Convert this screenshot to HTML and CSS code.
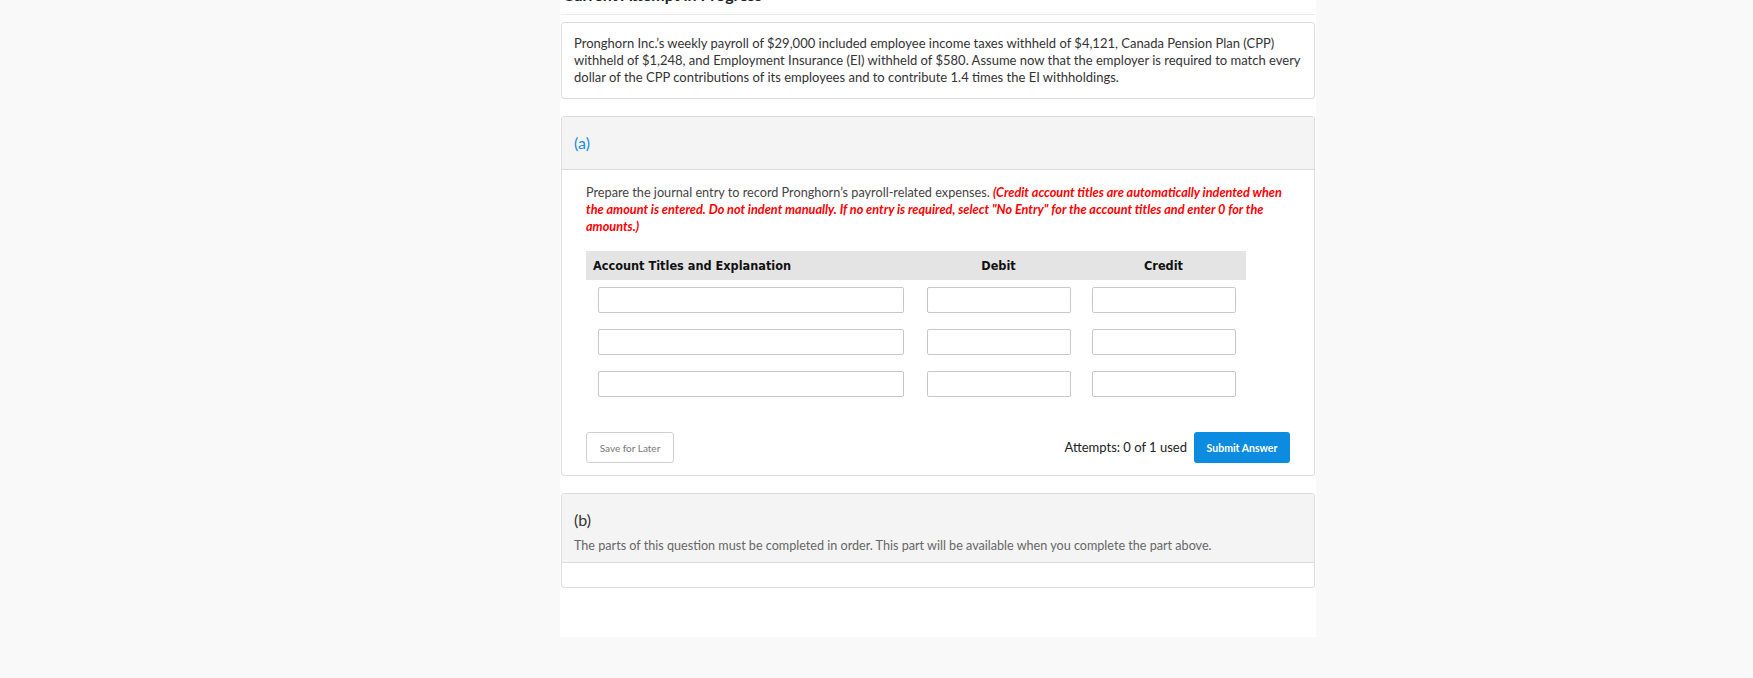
FILE: index.html
```html
<!DOCTYPE html>
<html lang="en">
<head>
    <meta charset="UTF-8">
    <meta name="viewport" content="width=device-width, initial-scale=1.0">
    <title>Current Attempt in Progress</title>
    <link rel="stylesheet" href="styles.css">
</head>
<body>
<div class="page">
    <div class="attempt-title">Current Attempt in Progress</div>

    <div class="card question">
        Pronghorn Inc.’s weekly payroll of $29,000 included employee income taxes withheld of $4,121, Canada Pension Plan (CPP)
        withheld of $1,248, and Employment Insurance (EI) withheld of $580. Assume now that the employer is required to match every
        dollar of the CPP contributions of its employees and to contribute 1.4 times the EI withholdings.
    </div>

    <div class="card part">
        <div class="part-head">
            <div class="part-label active">(a)</div>
        </div>
        <div class="part-body">
            <p class="instructions">
                Prepare the journal entry to record Pronghorn’s payroll-related expenses.
                <span class="note">(Credit account titles are automatically indented when the amount is entered. Do not indent manually. If no entry is required, select "No Entry" for the account titles and enter 0 for the amounts.)</span>
            </p>

            <div class="journal">
                <div class="journal-head">
                    <div class="col-title">Account Titles and Explanation</div>
                    <div class="col-num">Debit</div>
                    <div class="col-num">Credit</div>
                </div>
                <div class="journal-row">
                    <div class="cell"><input type="text" class="in-title"></div>
                    <div class="cell"><input type="text" class="in-num"></div>
                    <div class="cell"><input type="text" class="in-num"></div>
                </div>
                <div class="journal-row">
                    <div class="cell"><input type="text" class="in-title"></div>
                    <div class="cell"><input type="text" class="in-num"></div>
                    <div class="cell"><input type="text" class="in-num"></div>
                </div>
                <div class="journal-row">
                    <div class="cell"><input type="text" class="in-title"></div>
                    <div class="cell"><input type="text" class="in-num"></div>
                    <div class="cell"><input type="text" class="in-num"></div>
                </div>
            </div>

            <div class="actions">
                <button class="btn-save">Save for Later</button>
                <div class="submit-group">
                    <span class="attempts">Attempts: 0 of 1 used</span>
                    <button class="btn-submit">Submit Answer</button>
                </div>
            </div>
        </div>
    </div>

    <div class="card part">
        <div class="part-head locked">
            <div class="part-label">(b)</div>
            <div class="locked-text">The parts of this question must be completed in order. This part will be available when you complete the part above.</div>
        </div>
        <div class="part-body empty"></div>
    </div>
</div>
</body>
</html>
```

FILE: styles.css
```css
body {
    font-family: Lato, "Open Sans", Arial, sans-serif;
    background-color: #f9f9f9;
    margin: 0;
    padding: 0;
    color: #333;
}

.page {
    width: 756px;
    margin: -15px 0 0 560px;
    background-color: white;
    padding: 0 0 32px;
    box-sizing: border-box;
}

.attempt-title {
    font-size: 16px;
    font-weight: bold;
    line-height: 20px;
    color: #222;
    padding: 0 2px 9px;
    margin: 0 1px 7px;
    border-bottom: 1px solid #ebebeb;
}

.card {
    margin: 0 1px 17px;
    border: 1px solid #dcdcdc;
    border-radius: 3px;
    background-color: white;
}

.question {
    padding: 12px 12px;
    font-size: 13px;
    line-height: 17px;
    color: #333;
}

.part-head {
    background-color: #f4f4f4;
    border-bottom: 1px solid #dcdcdc;
    padding: 15px 12px;
}

.part-head.locked {
    padding: 15px 12px 8px;
}

.part-label {
    font-size: 16px;
    line-height: 22px;
    color: #333;
}

.part-label.active {
    color: #1b8ddb;
}

.locked-text {
    margin-top: 6px;
    font-size: 12.6px;
    line-height: 17px;
    color: #666;
}

.part-body {
    padding: 14px 24px 12px;
}

.part-body.empty {
    padding: 12px 0;
}

.instructions {
    margin: 0 0 16px;
    font-size: 12.7px;
    line-height: 17px;
    color: #444;
}

.note {
    color: #ff0000;
    font-weight: bold;
    font-style: italic;
}

.journal {
    width: 660px;
}

.journal-head,
.journal-row {
    display: grid;
    grid-template-columns: 330px 165px 165px;
}

.journal-head {
    background-color: #e4e4e4;
    height: 29px;
    align-items: center;
    font-family: "DejaVu Sans Condensed", "DejaVu Sans", sans-serif;
    font-size: 12.6px;
    font-weight: bold;
    color: #111;
}

.col-title {
    padding-left: 7px;
}

.col-num {
    text-align: center;
}

.journal-row {
    padding: 7px 0 9px;
}

.cell {
    display: flex;
    justify-content: center;
}

input[type="text"] {
    height: 26px;
    box-sizing: border-box;
    border: 1px solid #c8c8c8;
    border-radius: 2px;
    padding: 2px 5px;
    font-size: 13px;
    background: white;
}

.in-title {
    width: 306px;
}

.in-num {
    width: 144px;
}

.actions {
    margin-top: 26px;
    display: flex;
    justify-content: space-between;
    align-items: center;
}

.btn-save {
    width: 88px;
    height: 31px;
    background: white;
    border: 1px solid #cfcfcf;
    border-radius: 3px;
    font-family: Lato, Arial, sans-serif;
    font-size: 10px;
    color: #777;
    padding: 0;
}

.submit-group {
    display: flex;
    align-items: center;
    gap: 7px;
}

.attempts {
    font-size: 13px;
    color: #222;
    margin-top: -2px;
}

.btn-submit {
    width: 96px;
    height: 31px;
    background-color: #0b8ce0;
    color: white;
    border: none;
    border-radius: 3px;
    font-family: Lato, Arial, sans-serif;
    font-size: 10.5px;
    font-weight: bold;
    padding: 0;
}
```
